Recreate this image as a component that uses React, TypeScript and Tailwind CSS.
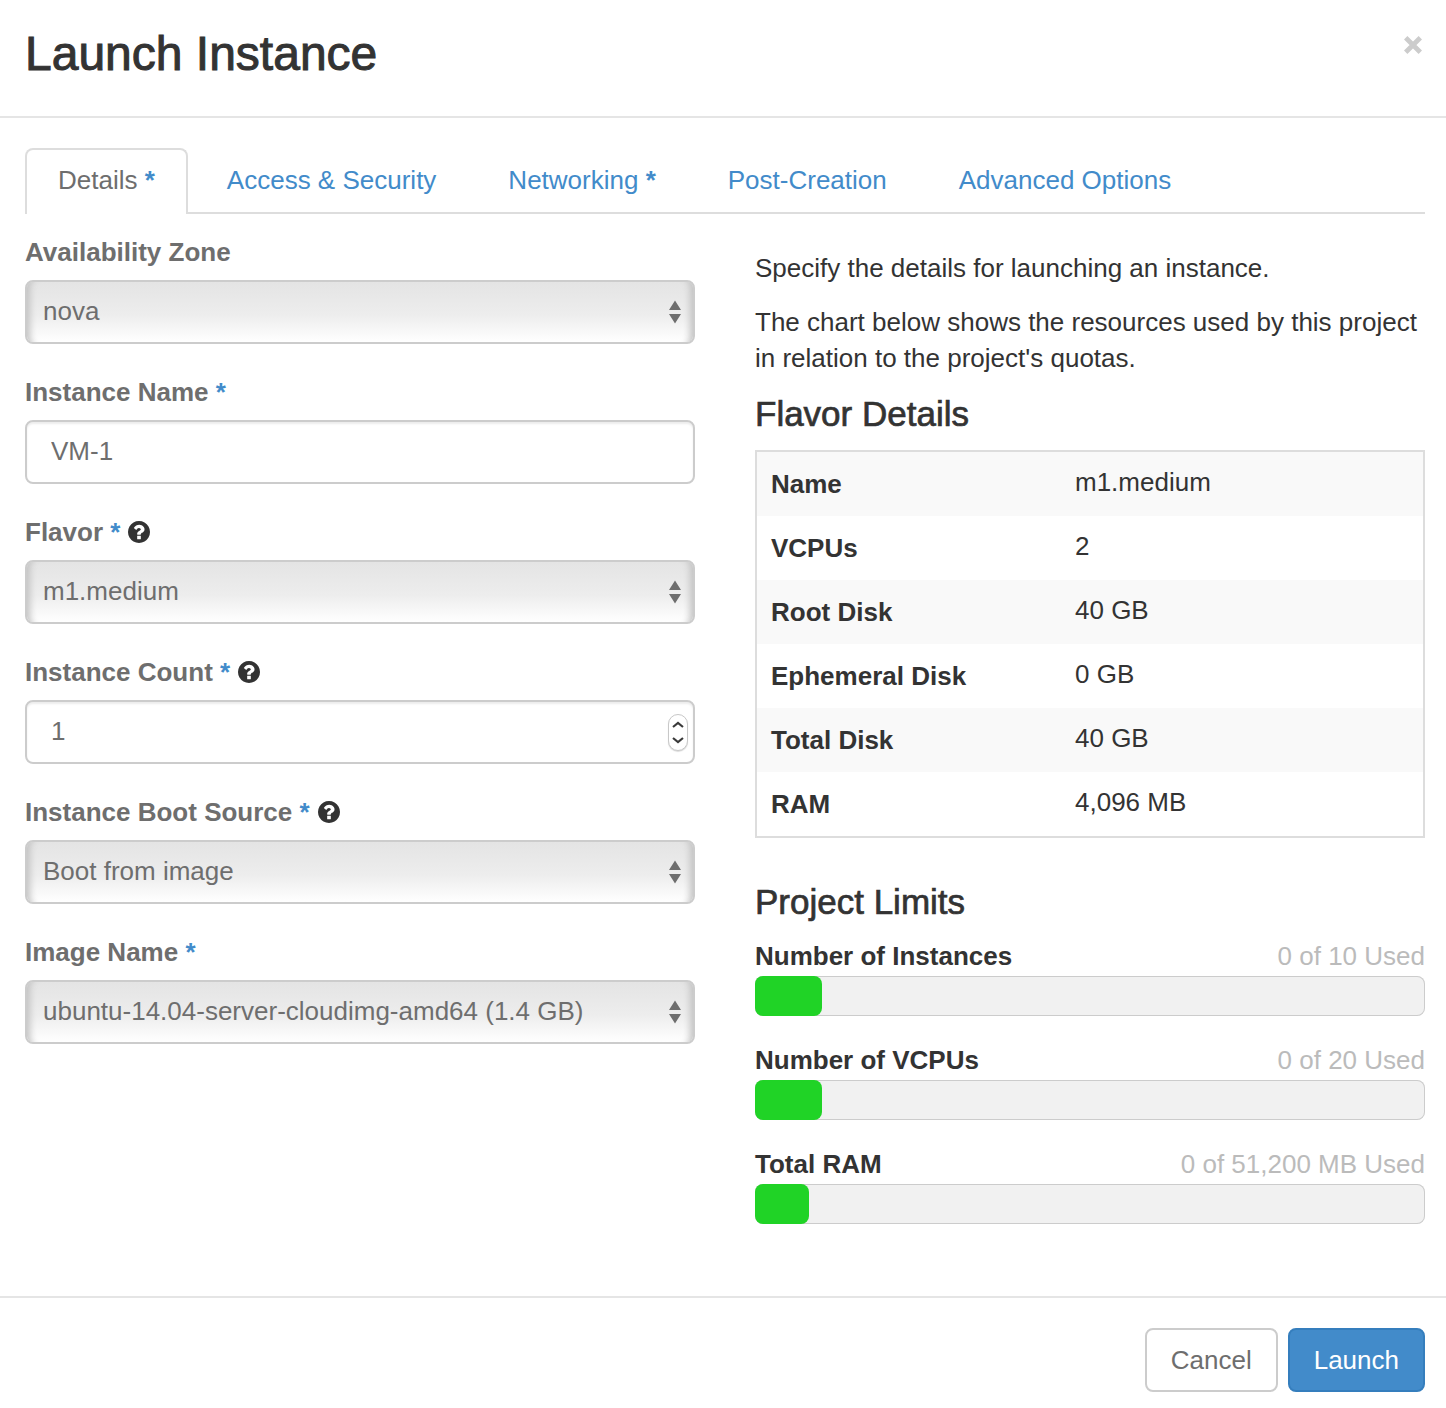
import React, { useState } from "react";

const FIELD =
  "block h-16 w-full rounded-lg border-2 border-[#ccc] pb-0.5 text-[26px] leading-9 text-[#6e6e6e] outline-none focus-visible:border-[#428bca]";

function Required() {
  return <span className="font-bold text-[#428bca]">*</span>;
}

function HelpButton({ topic }: { topic: string }) {
  return (
    <button type="button" aria-label={`Help: ${topic}`} className="text-[#333]">
      <svg viewBox="0 128 1536 1536" className="size-[22px]" fill="currentColor" aria-hidden="true">
        <path d="M896 1376v-192q0-14-9-23t-23-9h-192q-14 0-23 9t-9 23v192q0 14 9 23t23 9h192q14 0 23-9t9-23zm256-672q0-88-55.5-163t-138.5-116-170-41q-243 0-371 213-15 24 8 42l132 100q7 6 19 6 16 0 25-12 53-68 86-92 34-24 86-24 48 0 85.5 26t37.5 59q0 38-20 61t-68 45q-63 28-115.5 86.5t-52.5 125.5v36q0 14 9 23t23 9h192q14 0 23-9t9-23q0-19 21.5-49.5t54.5-49.5q32-18 49-28.5t46-35 44.5-48 28-60.5 12.5-81zm384 192q0 209-103 385.5t-279.5 279.5-385.5 103-385.5-103-279.5-279.5-103-385.5 103-385.5 279.5-279.5 385.5-103 385.5 103 279.5 279.5 103 385.5z" />
      </svg>
    </button>
  );
}

type FieldProps = {
  id: string;
  label: string;
  required?: boolean;
  help?: boolean;
  children: React.ReactNode;
};

function Field({ id, label, required, help, children }: FieldProps) {
  return (
    <div>
      <div className="mb-2.5 flex h-9 items-center gap-2">
        <label htmlFor={id} className="font-bold text-[#6e6e6e]">
          {label} {required && <Required />}
        </label>
        {help && <HelpButton topic={label} />}
      </div>
      {children}
    </div>
  );
}

function Select({ id, value }: { id: string; value: string }) {
  return (
    <div className="relative">
      <select
        id={id}
        defaultValue={value}
        className={`${FIELD} appearance-none bg-linear-to-b from-[#e4e4e4] via-[#ededed] via-55% to-white pr-12 pl-4 shadow-[inset_11px_0_7px_-8px_#c2c2c2,inset_-11px_0_7px_-8px_#c2c2c2]`}
      >
        <option>{value}</option>
      </select>
      <svg
        viewBox="0 0 12 24"
        className="pointer-events-none absolute top-5 right-3.5 h-6 w-3"
        fill="#6e6e6e"
        aria-hidden="true"
      >
        <path d="M6 0.5 12 10H0zM6 23.5 0 14h12z" />
      </svg>
    </div>
  );
}

function CountInput({ id }: { id: string }) {
  const [count, setCount] = useState(1);
  return (
    <div className="relative">
      <input
        id={id}
        type="number"
        min={1}
        value={count}
        onChange={(e) => setCount(Number(e.target.value))}
        className={`${FIELD} appearance-none bg-white px-6 shadow-[inset_0_2px_2px_rgba(0,0,0,0.075)] [-moz-appearance:textfield] [&::-webkit-inner-spin-button]:appearance-none`}
      />
      <div className="absolute top-3.5 right-[7px] flex h-[37px] w-5 flex-col overflow-hidden rounded-full border border-[#c8c8c8] bg-white shadow-[0_1px_1px_rgba(0,0,0,0.15)]">
        <button
          type="button"
          aria-label="Increase"
          onClick={() => setCount(count + 1)}
          className="flex flex-1 items-center justify-center pt-0.5"
        >
          <svg viewBox="0 0 12 7" className="h-[7px] w-3" fill="none" stroke="#3a3a3a" strokeWidth="2.2" aria-hidden="true">
            <path d="m1 6 5-4 5 4" />
          </svg>
        </button>
        <button
          type="button"
          aria-label="Decrease"
          onClick={() => setCount(Math.max(1, count - 1))}
          className="flex flex-1 items-center justify-center pb-0.5"
        >
          <svg viewBox="0 0 12 7" className="h-[7px] w-3" fill="none" stroke="#3a3a3a" strokeWidth="2.2" aria-hidden="true">
            <path d="m1 1 5 4 5-4" />
          </svg>
        </button>
      </div>
    </div>
  );
}

const TABS = [
  { name: "Details", required: true, active: true },
  { name: "Access & Security" },
  { name: "Networking", required: true },
  { name: "Post-Creation" },
  { name: "Advanced Options" },
];

const FLAVOR = [
  ["Name", "m1.medium"],
  ["VCPUs", "2"],
  ["Root Disk", "40 GB"],
  ["Ephemeral Disk", "0 GB"],
  ["Total Disk", "40 GB"],
  ["RAM", "4,096 MB"],
];

const LIMITS = [
  { name: "Number of Instances", used: "0 of 10 Used", percent: 10 },
  { name: "Number of VCPUs", used: "0 of 20 Used", percent: 10 },
  { name: "Total RAM", used: "0 of 51,200 MB Used", percent: 8 },
];

export default function App() {
  return (
    <div
      role="dialog"
      aria-labelledby="dialog-title"
      className="bg-white font-['Liberation_Sans',Arial,sans-serif] text-[26px] leading-9 text-[#333]"
    >
      <header className="flex items-start justify-between border-b-2 border-[#e5e5e5] pt-6 pr-6 pb-8 pl-[25px]">
        <h1 id="dialog-title" className="text-[48px] leading-[60px] [-webkit-text-stroke:1px_#333]">
          Launch Instance
        </h1>
        <button type="button" aria-label="Close" className="mt-3 text-[#ccc]">
          <svg viewBox="0 0 18 18" className="size-[18px]" fill="none" stroke="currentColor" strokeWidth="4.8" aria-hidden="true">
            <path d="m1.7 1.7 14.6 14.6M16.3 1.7 1.7 16.3" />
          </svg>
        </button>
      </header>

      <form onSubmit={(e) => e.preventDefault()}>
        <div className="pt-[30px] pr-[21px] pb-[72px] pl-[25px]">
          <nav className="flex gap-1.5 border-b-2 border-[#ddd]">
            {TABS.map((tab) => (
              <a
                key={tab.name}
                href="#"
                aria-current={tab.active ? "page" : undefined}
                className={
                  tab.active
                    ? "-mb-0.5 rounded-t-lg border-2 border-b-0 border-[#ddd] bg-white px-[31px] pt-3 pb-4 text-[#6e6e6e]"
                    : "px-[33px] pt-3.5 pb-3.5 text-[#428bca]"
                }
              >
                {tab.name} {tab.required && <Required />}
              </a>
            ))}
          </nav>

          <div className="mt-5 grid grid-cols-2 gap-[60px]">
            <div className="flex flex-col gap-[30px]">
              <Field id="zone" label="Availability Zone">
                <Select id="zone" value="nova" />
              </Field>
              <Field id="name" label="Instance Name" required>
                <input
                  id="name"
                  type="text"
                  defaultValue="VM-1"
                  className={`${FIELD} bg-white px-6 shadow-[inset_0_2px_2px_rgba(0,0,0,0.075)]`}
                />
              </Field>
              <Field id="flavor" label="Flavor" required help>
                <Select id="flavor" value="m1.medium" />
              </Field>
              <Field id="count" label="Instance Count" required help>
                <CountInput id="count" />
              </Field>
              <Field id="source" label="Instance Boot Source" required help>
                <Select id="source" value="Boot from image" />
              </Field>
              <Field id="image" label="Image Name" required>
                <Select id="image" value="ubuntu-14.04-server-cloudimg-amd64 (1.4 GB)" />
              </Field>
            </div>

            <div className="pt-4">
              <p className="mb-[18px]">Specify the details for launching an instance.</p>
              <p className="mb-[18px]">
                The chart below shows the resources used by this project in relation to the project's quotas.
              </p>
              <h2 className="mb-4 text-[35px] leading-10 [-webkit-text-stroke:0.7px_#333]">Flavor Details</h2>
              <table className="w-full border-separate border-spacing-0 border-2 border-[#ddd] text-left">
                <tbody>
                  {FLAVOR.map(([name, value]) => (
                    <tr key={name} className="h-16 odd:bg-[#f9f9f9]">
                      <th scope="row" className="w-[304px] pl-3.5 font-bold">
                        {name}
                      </th>
                      <td className="pb-1 pl-3.5">{value}</td>
                    </tr>
                  ))}
                </tbody>
              </table>

              <h2 className="mt-11 mb-[18px] text-[35px] leading-10 [-webkit-text-stroke:0.7px_#333]">Project Limits</h2>
              <div className="flex flex-col gap-7">
                {LIMITS.map((limit) => (
                  <div key={limit.name}>
                    <div className="mb-1 flex justify-between leading-8">
                      <strong className="font-bold">{limit.name}</strong>
                      <span className="text-[#bbb]">{limit.used}</span>
                    </div>
                    <div
                      role="progressbar"
                      aria-label={limit.name}
                      aria-valuenow={limit.percent}
                      className="h-10 rounded-lg bg-[#f1f1f1] inset-ring inset-ring-[#ccc]"
                    >
                      <div className="h-full rounded-lg bg-[#20d326]" style={{ width: `${limit.percent}%` }} />
                    </div>
                  </div>
                ))}
              </div>
            </div>
          </div>
        </div>

        <footer className="flex justify-end gap-2.5 border-t-2 border-[#e5e5e5] pt-[30px] pr-[21px] pb-4">
          <button type="button" className="h-16 rounded-lg border-2 border-[#ccc] bg-white px-6 text-[#6e6e6e]">
            Cancel
          </button>
          <button type="submit" className="h-16 rounded-lg border-2 border-[#357ebd] bg-[#428bca] px-6 text-white">
            Launch
          </button>
        </footer>
      </form>
    </div>
  );
}
